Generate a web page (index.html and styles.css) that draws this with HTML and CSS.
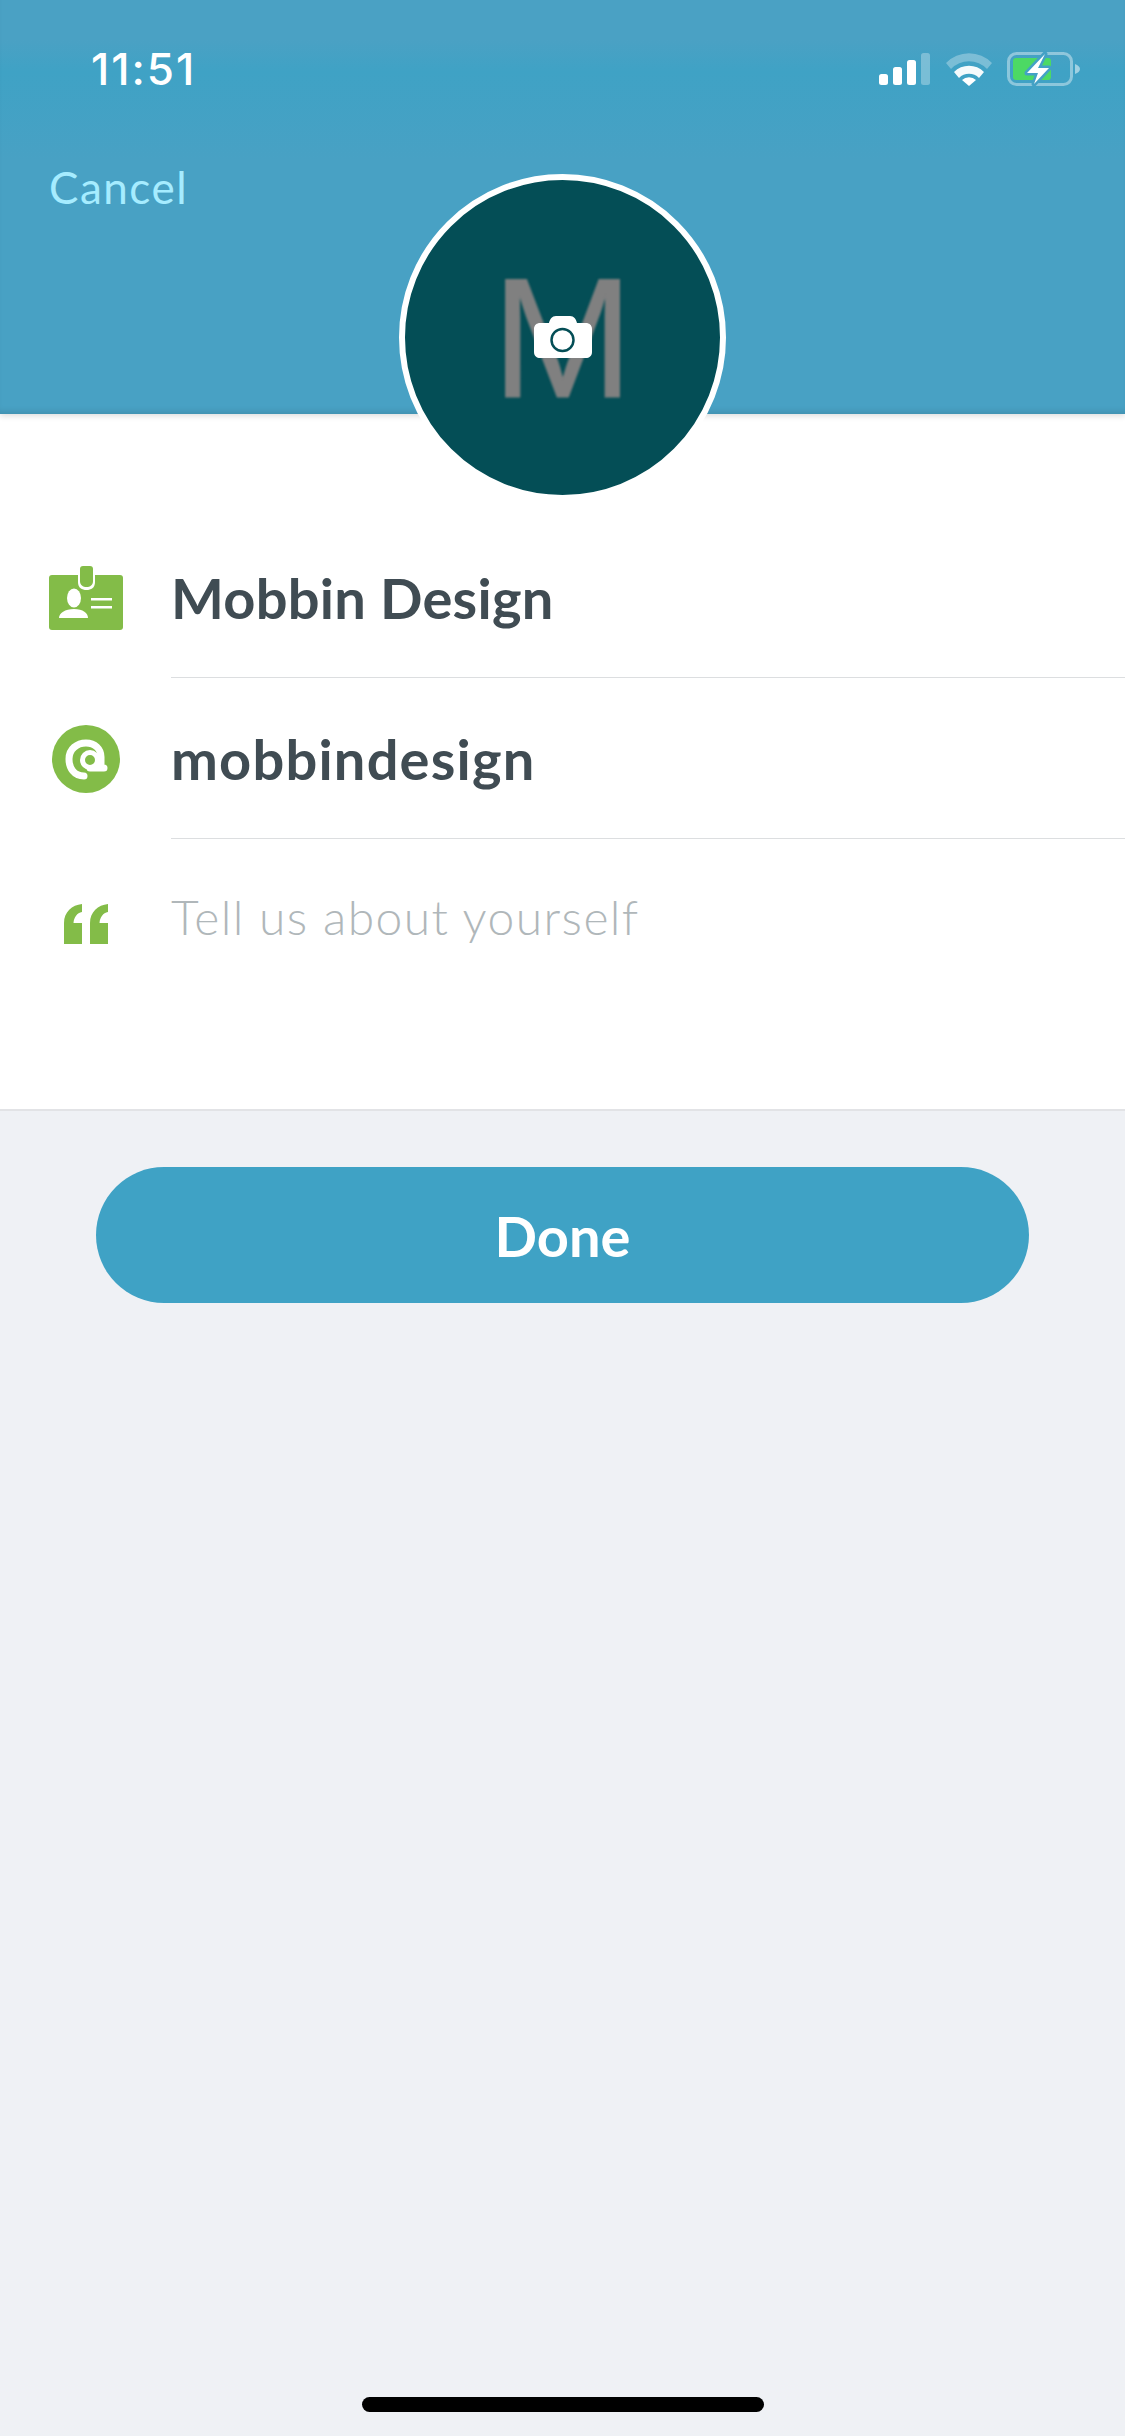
FILE: index.html
```html
<!DOCTYPE html>
<html>
<head>
  <title>Edit Profile</title>
  <link rel="stylesheet" href="styles.css">
</head>
<body>

  <div class="screen">
    <div class="header">
      <div class="status-bar">
        <span class="time">11:51</span>
        <div class="status-icons">
          <svg width="52" height="32" viewBox="0 0 52 32">
            <rect x="0" y="21" width="9" height="11" rx="2.5" fill="#fff"/>
            <rect x="14" y="14" width="9" height="18" rx="2.5" fill="#fff"/>
            <rect x="28" y="7" width="9" height="25" rx="2.5" fill="#fff"/>
            <rect x="42" y="0" width="9" height="32" rx="2.5" fill="#fff" opacity="0.3"/>
          </svg>
          <svg width="46" height="34" viewBox="0 0 46 34">
            <path d="M0 11 A32 32 0 0 1 46 11 L41 17 A25 25 0 0 0 5 17 Z" fill="#fff" opacity="0.3"/>
            <path d="M8 20 A21 21 0 0 1 38 20 L33 26 A14 14 0 0 0 13 26 Z" fill="#fff" opacity="0.95"/>
            <path d="M16 28 A10 10 0 0 1 30 28 L23 34 Z" fill="#fff"/>
          </svg>
          <svg width="74" height="36" viewBox="0 0 74 36">
            <rect x="1.5" y="2.5" width="63" height="31" rx="8" fill="none" stroke="#fff" stroke-opacity="0.4" stroke-width="3"/>
            <rect x="6" y="7" width="38" height="22" rx="3" fill="#4cd964"/>
            <path d="M68 13 C71 14 73 16 73 18 C73 20 71 22 68 23 Z" fill="#fff" opacity="0.5"/>
            <path d="M38 3 L31 17 L42 17 L27 33 L31 22 L20 22 Z" fill="#fff" stroke="#43a1c5" stroke-width="5" paint-order="stroke" stroke-linejoin="round"/>
          </svg>
        </div>
      </div>
      <a class="cancel">Cancel</a>
    </div>

    <div class="avatar">
      <span class="avatar-letter">M</span>
      <svg class="camera" width="58" height="42" viewBox="0 0 58 42">
        <path d="M6 7 H15 C16 3 18 0 22 0 H36 C40 0 42 3 43 7 H52 C55 7 58 9 58 13 V36 C58 40 55 42 52 42 H6 C3 42 0 40 0 36 V13 C0 9 3 7 6 7 Z" fill="#fff"/>
        <circle cx="28.500" cy="24" r="11" fill="#fff" stroke="#044e56" stroke-width="2.500"/>
      </svg>
    </div>

    <div class="form">
      <div class="row">
        <div class="row-icon">
          <svg width="74" height="64" viewBox="0 0 74 64">
            <path d="M3 9 H71 C73 9 74 10 74 12 V61 C74 63 73 64 71 64 H3 C1 64 0 63 0 61 V12 C0 10 1 9 3 9 Z" fill="#83bc48"/>
            <path d="M29 4 H46 V16 C46 22 42 24 37.500 24 C33 24 29 22 29 16 Z" fill="#fff"/>
            <path d="M31 3 C31 1 32 0 34 0 H41 C43 0 44 1 44 3 V15 C44 19 41 21 37.500 21 C34 21 31 19 31 15 Z" fill="#83bc48"/>
            <ellipse cx="25" cy="32" rx="7" ry="9.500" fill="#fff"/>
            <path d="M10 52 C10 47 16 43 25 43 C34 43 39 47 39 52 Z" fill="#fff"/>
            <rect x="42" y="32" width="21" height="2.500" fill="#fff"/>
            <rect x="42" y="40" width="21" height="2.500" fill="#fff"/>
          </svg>
        </div>
        <div class="row-text name">Mobbin Design</div>
      </div>
      <div class="row">
        <div class="row-icon">
          <svg width="68" height="68" viewBox="0 0 68 68">
            <circle cx="34" cy="34" r="34" fill="#83bc48"/>
            <path d="M32 51 C22 51 17 43 17 34 C17 24 25 18 34 18 C43 18 49 24 49 32 V43 M38 43 H52" fill="none" stroke="#fff" stroke-width="7" stroke-linecap="round"/>
            <circle cx="38" cy="35" r="7.500" fill="#83bc48" stroke="#fff" stroke-width="5"/>
          </svg>
        </div>
        <div class="row-text handle">mobbindesign</div>
      </div>
      <div class="row row-bio">
        <div class="row-icon">
          <svg width="44" height="40" viewBox="0 0 44 40">
            <path d="M18 0 V8 C13 9 10 13 9.500 19 H18 V40 H0 V19 C0 8 8 1 18 0 Z" fill="#83bc48"/>
            <path d="M44 0 V8 C39 9 36 13 35.500 19 H44 V40 H26 V19 C26 8 34 1 44 0 Z" fill="#83bc48"/>
          </svg>
        </div>
        <div class="row-text placeholder">Tell us about yourself</div>
      </div>
    </div>

    <div class="actions">
      <button class="done-btn">Done</button>
    </div>

    <div class="home-bar"></div>
  </div>

</body>
</html>
```

FILE: styles.css
```css
body {
  margin: 0;
  background: #eff1f5;
  font-family: Lato, "Open Sans", sans-serif;
}
.screen {
  position: relative;
  width: 1125px;
  height: 2436px;
  display: flex;
  flex-direction: column;
  overflow: hidden;
}
.header {
  position: relative;
  z-index: 1;
  height: 414px;
  flex-shrink: 0;
  box-sizing: border-box;
  padding: 0 44px 0 48px;
  background: linear-gradient(to bottom, #4aa1c4 0px, #4aa1c4 40px, #3fa2c5 72px, #48a1c4 160px, #48a1c4 100%);
  box-shadow: 0 2px 6px rgba(0, 0, 0, 0.14), inset 0 -6px 6px -4px rgba(0, 0, 0, 0.12);
}
.status-bar {
  height: 160px;
  display: flex;
  justify-content: space-between;
  align-items: flex-start;
}
.time {
  margin: 43px 0 0 43px;
  font-family: Inter, sans-serif;
  font-size: 44px;
  line-height: 52px;
  letter-spacing: 2px;
  font-weight: 500;
  color: #fff;
}
.status-icons {
  display: flex;
  align-items: center;
  gap: 15px;
  margin-top: 51px;
}
.cancel {
  display: block;
  margin-left: 1px;
  font-size: 44px;
  line-height: 54px;
  letter-spacing: 1.5px;
  font-weight: 400;
  color: #a6ecff;
}
.avatar {
  position: absolute;
  z-index: 2;
  left: 399px;
  top: 174px;
  width: 327px;
  height: 327px;
  box-sizing: border-box;
  border: 6px solid #fff;
  border-radius: 50%;
  background: #044e56;
  display: flex;
  align-items: center;
  justify-content: center;
}
.avatar-letter {
  font-family: "Liberation Sans", sans-serif;
  font-size: 170px;
  line-height: 1;
  color: #808080;
  -webkit-text-stroke: 1px #808080;
  filter: blur(0.8px);
}
.camera {
  position: absolute;
  left: 129px;
  top: 136px;
}
.form {
  background: #fff;
  height: 697px;
  flex-shrink: 0;
  box-sizing: border-box;
  padding-top: 103px;
  border-bottom: 2px solid #e2e3e6;
}
.row {
  display: flex;
  align-items: center;
  height: 161px;
}
.row-bio {
  align-items: flex-start;
}
.row-bio .row-icon {
  padding-top: 65px;
}
.row-icon {
  width: 171px;
  flex-shrink: 0;
  display: flex;
  justify-content: center;
}
.row-text {
  flex: 1;
  align-self: stretch;
  display: flex;
  align-items: center;
  box-sizing: border-box;
  border-bottom: 1px solid #dcdee0;
  font-size: 56px;
  font-weight: 700;
  letter-spacing: 0.25px;
  color: #404c53;
}
.handle {
  letter-spacing: 1.2px;
}
.placeholder {
  display: block;
  border-bottom: none;
  padding-top: 48px;
  font-size: 48px;
  line-height: 60px;
  letter-spacing: 1.4px;
  font-weight: 300;
  color: #b0b7ba;
}
.actions {
  padding: 56px 96px 0;
}
.done-btn {
  display: block;
  width: 100%;
  height: 136px;
  border: none;
  border-radius: 68px;
  background: #3fa2c5;
  color: #fff;
  font-family: Lato, sans-serif;
  font-size: 56px;
  font-weight: 700;
}
.home-bar {
  position: absolute;
  left: 362px;
  top: 2397px;
  width: 402px;
  height: 15px;
  border-radius: 8px;
  background: #000;
}
```
